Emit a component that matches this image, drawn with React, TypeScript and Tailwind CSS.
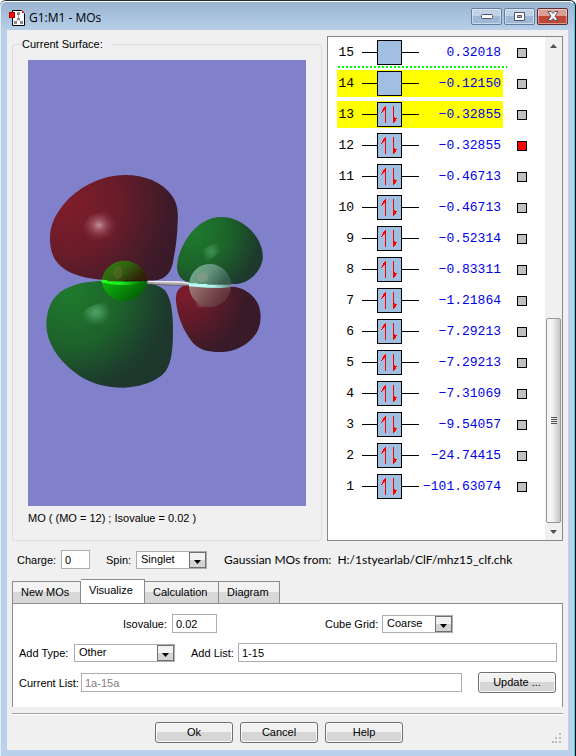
import { useState } from "react";
import type { ReactNode } from "react";

type Orbital = { n: number; energy: string; occupied: boolean; highlighted?: boolean };

const ORBITALS: Orbital[] = [
  { n: 15, energy: "0.32018", occupied: false },
  { n: 14, energy: "-0.12150", occupied: false, highlighted: true },
  { n: 13, energy: "-0.32855", occupied: true, highlighted: true },
  { n: 12, energy: "-0.32855", occupied: true },
  { n: 11, energy: "-0.46713", occupied: true },
  { n: 10, energy: "-0.46713", occupied: true },
  { n: 9, energy: "-0.52314", occupied: true },
  { n: 8, energy: "-0.83311", occupied: true },
  { n: 7, energy: "-1.21864", occupied: true },
  { n: 6, energy: "-7.29213", occupied: true },
  { n: 5, energy: "-7.29213", occupied: true },
  { n: 4, energy: "-7.31069", occupied: true },
  { n: 3, energy: "-9.54057", occupied: true },
  { n: 2, energy: "-24.74415", occupied: true },
  { n: 1, energy: "-101.63074", occupied: true },
];

const TABS = [
  { name: "New MOs", width: "w-[69px]" },
  { name: "Visualize", width: "w-[64px]" },
  { name: "Calculation", width: "w-[74px]" },
  { name: "Diagram", width: "w-[61px]" },
];

function AppIcon() {
  return (
    <svg width="17" height="18" viewBox="0 0 17 18" aria-hidden="true">
      <path d="M3.500 1.500H12.500L15.500 4.500V16.500H3.500Z" fill="#fff" stroke="#000" />
      <path d="M13 2H14L15 3V4H13Z" fill="#f00" />
      <path d="M9.500 5V10L6 14M9.500 10L13 14" fill="none" stroke="#aaa" />
      <path d="M8 3H11V6H8ZM8 9H11V11H8ZM5 12H8V15H5ZM11 12H14V15H11Z" fill="#8b8b8b" />
      <rect x="0.5" y="3.5" width="5" height="5" fill="#f00" stroke="#b00" />
    </svg>
  );
}

function CaptionButton({ label, close, children }: { label: string; close?: boolean; children: ReactNode }) {
  return (
    <button
      aria-label={label}
      className={`flex h-[17px] w-[31px] items-center justify-center rounded-xs border shadow-[inset_0_0_0_1px_rgba(255,255,255,0.45)] ${
        close
          ? "border-[#5b2a33] bg-linear-to-b from-[#dc9e92] from-45% to-[#bd4634] to-50%"
          : "border-[#647f9e] bg-linear-to-b from-[#bfd2e6] from-45% to-[#9fb8d3] to-50%"
      }`}
    >
      {children}
    </button>
  );
}

function Surface() {
  return (
    <svg
      className="min-h-0 w-full grow"
      viewBox="28 60 278 446"
      preserveAspectRatio="xMidYMid slice"
      role="img"
      aria-label="Molecular orbital surface"
    >
      <defs>
        <radialGradient id="redBig" gradientUnits="userSpaceOnUse" cx="110" cy="130" r="350">
          <stop offset="0" stopColor="#7f1d2b" />
          <stop offset="0.45" stopColor="#691c29" />
          <stop offset="0.85" stopColor="#401b29" />
          <stop offset="1" stopColor="#381a28" />
        </radialGradient>
        <radialGradient id="greenBig" gradientUnits="userSpaceOnUse" cx="120" cy="400" r="310">
          <stop offset="0" stopColor="#1f7a2d" />
          <stop offset="0.5" stopColor="#1d622b" />
          <stop offset="0.85" stopColor="#1d402d" />
          <stop offset="1" stopColor="#1d372c" />
        </radialGradient>
        <radialGradient id="greenSmall" gradientUnits="userSpaceOnUse" cx="490" cy="215" r="205">
          <stop offset="0" stopColor="#1f7a2d" />
          <stop offset="0.5" stopColor="#1c652a" />
          <stop offset="1" stopColor="#1d382c" />
        </radialGradient>
        <radialGradient id="redSmall" gradientUnits="userSpaceOnUse" cx="465" cy="400" r="185">
          <stop offset="0" stopColor="#7d1b2a" />
          <stop offset="0.5" stopColor="#5e1a29" />
          <stop offset="1" stopColor="#391a28" />
        </radialGradient>
        <radialGradient id="shineRed">
          <stop offset="0" stopColor="#c3909d" />
          <stop offset="0.35" stopColor="#a55a68" stopOpacity="0.75" />
          <stop offset="1" stopColor="#7f2535" stopOpacity="0" />
        </radialGradient>
        <radialGradient id="shineGreen">
          <stop offset="0" stopColor="#50a366" />
          <stop offset="0.5" stopColor="#439056" stopOpacity="0.75" />
          <stop offset="1" stopColor="#30783e" stopOpacity="0.1" />
        </radialGradient>
        <linearGradient id="atomTop" x1="0" y1="0" x2="1" y2="0.55">
          <stop offset="0" stopColor="#2f8510" />
          <stop offset="0.55" stopColor="#335f10" />
          <stop offset="1" stopColor="#302006" />
        </linearGradient>
        <linearGradient id="atomBottom" x1="0" y1="0" x2="1" y2="0.5">
          <stop offset="0" stopColor="#0db80f" />
          <stop offset="0.45" stopColor="#07930a" />
          <stop offset="1" stopColor="#065906" />
        </linearGradient>
        <linearGradient id="fluorTop" x1="0" y1="0" x2="1" y2="0.4">
          <stop offset="0" stopColor="#79ae8c" />
          <stop offset="0.55" stopColor="#63957d" />
          <stop offset="1" stopColor="#365d4e" />
        </linearGradient>
        <linearGradient id="fluorBottom" x1="0" y1="0" x2="1" y2="0.4">
          <stop offset="0" stopColor="#a37c79" />
          <stop offset="0.6" stopColor="#764a4d" />
          <stop offset="1" stopColor="#5d3038" />
        </linearGradient>
        <linearGradient id="band" x1="0" x2="1">
          <stop offset="0" stopColor="#23ff25" />
          <stop offset="0.45" stopColor="#1de81f" />
          <stop offset="1" stopColor="#087009" />
        </linearGradient>
        <linearGradient id="fluorBand" x1="0" x2="1">
          <stop offset="0" stopColor="#bafff8" />
          <stop offset="0.55" stopColor="#b1f5f1" />
          <stop offset="1" stopColor="#658b87" />
        </linearGradient>
      </defs>
      <rect x="-500" y="-500" width="1600" height="1600" fill="#8180cb" />
      <g transform="translate(30 160) scale(0.33333)">
        <path
          d="M285 45C215 45 150 80 110 123C76 160 60 195 60 235C60 285 78 312 112 333C150 352 190 358 230 360L365 362C408 362 426 334 430 300C438 260 442 225 443 185C445 155 442 128 424 104C395 66 345 45 285 45Z"
          fill="url(#redBig)"
        />
        <path
          d="M222 362C160 364 105 376 76 410C52 438 46 480 51 516C60 566 96 610 145 645C185 672 230 683 280 683C330 682 386 664 409 631C426 602 429 560 429 510C429 450 422 415 405 391C380 365 310 362 222 362Z"
          fill="url(#greenBig)"
        />
        <path
          d="M575 171C535 171 500 193 474 230C453 262 442 290 441 323C443 348 455 362 478 367L620 372C662 366 692 334 698 298C701 265 685 230 655 203C632 184 605 171 575 171Z"
          fill="url(#greenSmall)"
        />
        <path
          d="M470 376C445 379 436 398 438 424C442 466 459 513 489 549C510 570 534 576 570 576C615 577 662 553 683 512C694 488 695 456 684 431C669 402 640 381 605 380Z"
          fill="url(#redSmall)"
        />
        <path d="M150 205L178 168L245 145L263 160L250 228L185 246Z" fill="url(#shineRed)" />
        <path d="M152 470L170 445L236 418L243 496L163 493Z" fill="url(#shineGreen)" />
        <path d="M513 292L522 266L574 240L568 278L532 308Z" fill="url(#shineGreen)" opacity="0.7" />
        <ellipse cx="515" cy="432" rx="26" ry="16" fill="url(#shineRed)" opacity="0.7" />

        <path d="M215 363A69 69 0 0 1 352 363Z" fill="url(#atomTop)" />
        <path d="M215 363A69 69 0 0 0 352 363Z" fill="url(#atomBottom)" />
        <ellipse cx="264" cy="338" rx="14" ry="19" fill="#78723c" opacity="0.35" />
        <path d="M214 359L232 360V364L285 366L342 365C320 374 280 378 242 373L214 367Z" fill="url(#band)" />
        <path d="M285 362H350" stroke="#25170a" strokeWidth="3" strokeDasharray="15 4" />

        <path d="M352 363L452 364L481 368V377L420 375L352 371Z" fill="#aaa5aa" />
        <path d="M355 364L452 366L480 370" fill="none" stroke="#f1eff1" strokeWidth="4" />
        <path d="M352 372L430 376L480 377" fill="none" stroke="#5a555a" strokeWidth="2" />

        <path d="M477 374A63 64 0 0 1 603 378Z" fill="url(#fluorTop)" />
        <path d="M477 374A63 64 0 0 0 603 380Z" fill="url(#fluorBottom)" />
        <ellipse cx="518" cy="352" rx="17" ry="14" fill="#b0a28e" opacity="0.3" />
        <path d="M477 370H502V372H532V374H603V381L575 384L532 383L477 379Z" fill="url(#fluorBand)" />
      </g>
    </svg>
  );
}

function SpinBox({ occupied }: { occupied: boolean }) {
  return (
    <svg width="25" height="25" viewBox="0 0 25 25" className="shrink-0" aria-hidden="true">
      <rect x="0.5" y="0.5" width="24" height="24" fill="#a1bfe0" stroke="#000" />
      {occupied && (
        <g fill="#f00">
          <path d="M8 4H9V21H8V8H7V9H6V10H5V11H4V10H5V8H6V6H7V5H8Z" />
          <path d="M16 4H17V15H18V16H21V15V16H20V17H19V19H18V20H17V21H16Z" />
        </g>
      )}
    </svg>
  );
}

function OrbitalRow({ orbital, selected, onSelect }: { orbital: Orbital; selected: boolean; onSelect: () => void }) {
  return (
    <div className="flex h-[27px] items-center gap-3.5">
      <div
        className={`flex h-full w-[166px] items-center font-['Liberation_Mono',monospace] text-[13px] ${
          orbital.highlighted ? "bg-[#ffff00]" : ""
        }`}
      >
        <span className="w-[17px] text-right">{orbital.n}</span>
        <span className="ml-2 h-px w-[15px] bg-black" />
        <SpinBox occupied={orbital.occupied} />
        <span className="h-px w-[17px] bg-black" />
        <span className="grow pr-0.5 text-right text-[#0000e6]">{orbital.energy.replace("-", "−")}</span>
      </div>
      <input
        type="checkbox"
        aria-label={`Orbital ${orbital.n}`}
        checked={selected}
        onChange={onSelect}
        className="size-2.5 appearance-none border border-black bg-[#c0c0c0] checked:bg-[#ff0000]"
      />
    </div>
  );
}

function Dropdown({ id, value, width }: { id: string; value: string; width: string }) {
  return (
    <div className={`grid h-[18px] ${width} grid-cols-[1fr_17px] border border-[#abadb3] bg-white`}>
      <select
        id={id}
        defaultValue={value}
        className="col-span-2 col-start-1 row-start-1 h-4 appearance-none pb-0.5 pl-1 leading-[14px]"
      >
        <option>{value}</option>
      </select>
      <span className="pointer-events-none col-start-2 row-start-1 flex h-4 items-end justify-center border border-[#707070] bg-linear-to-b from-[#f2f2f2] from-50% to-[#d4d4d4] to-50% pb-[3px]">
        <svg width="7" height="4" viewBox="0 0 7 4" aria-hidden="true">
          <path d="M0 0H7L3.500 4Z" fill="#000" />
        </svg>
      </span>
    </div>
  );
}

function PushButton({ children }: { children: ReactNode }) {
  return (
    <button className="h-[21px] w-[78px] rounded-[3px] border border-[#707070] bg-linear-to-b from-[#f2f2f2] from-45% to-[#d6d6d6] to-50% pb-px shadow-[inset_0_0_0_1px_#fafafa]">
      {children}
    </button>
  );
}

const FIELD = "h-[19px] border border-[#abadb3] bg-white px-[3px]";

export default function App() {
  const [selected, setSelected] = useState(12);
  const [tab, setTab] = useState("Visualize");

  return (
    <div className="flex min-h-screen flex-col rounded-t-md border-t border-r border-t-[#202830] border-r-black bg-[#b9d1ea] font-['Liberation_Sans',Arial,sans-serif] text-[11px] leading-[14px] text-black">
      <div className="flex grow flex-col rounded-t-md border-t border-r border-l border-t-white border-r-[#35d5ee] border-l-[#e4eef8] bg-linear-to-b from-[#9ab4d1] to-[#b9d1ea] to-[30px] pr-1.5 pb-1.5 pl-1.5">
        <header className="flex h-7 items-center gap-[3px] pt-1 pl-0.5">
          <AppIcon />
          <h1 className="grow font-['Open_Sans',sans-serif] text-xs">G1:M1 - MOs</h1>
          <div className="flex gap-0.5 pb-1">
            <CaptionButton label="Minimize">
              <svg width="12" height="6" viewBox="0 0 12 6" aria-hidden="true">
                <rect x="0.5" y="1.500" width="11" height="4" rx="1" fill="#fff" stroke="#535666" />
              </svg>
            </CaptionButton>
            <CaptionButton label="Maximize">
              <svg width="11" height="9" viewBox="0 0 11 9" aria-hidden="true">
                <path d="M0.500 0.500H10.500V8.500H0.500ZM3.500 3.500V5.500H7.500V3.500Z" fill="#fff" fillRule="evenodd" stroke="#535666" />
              </svg>
            </CaptionButton>
            <CaptionButton label="Close" close>
              <svg width="12" height="10" viewBox="0 0 12 10" aria-hidden="true">
                <path d="M1 0.500H4L6 2.500L8 0.500H11L8 5L11 9.500H8L6 7.500L4 9.500H1L4 5Z" fill="#fff" stroke="#535666" />
              </svg>
            </CaptionButton>
          </div>
        </header>

        <main className="flex grow flex-col bg-[#f0f0f0] px-[5px] pt-1.5 pb-[7px]">
          <section className="flex grow gap-[5px]">
            <fieldset className="mt-px flex grow flex-col rounded-[3px] border border-[#d5dfe5] px-[15px] pt-[9px] pb-[13px]">
              <legend className="-ml-1.5 pr-2">Current Surface:</legend>
              <Surface />
              <p className="mt-[5px] h-4">MO ( (MO = 12) ; Isovalue = 0.02 )</p>
            </fieldset>

            <div className="flex w-[236px] shrink-0 border border-[#828790] bg-white">
              <ul className="grow space-y-1 pt-0.5 pb-10 pl-[9px]">
                {ORBITALS.map((orbital) => (
                  <li key={orbital.n} className="relative">
                    <OrbitalRow
                      orbital={orbital}
                      selected={orbital.n === selected}
                      onSelect={() => setSelected(orbital.n)}
                    />
                    {orbital.n === 15 && (
                      <span className="absolute top-full left-px h-0.5 w-[169px] bg-[repeating-linear-gradient(90deg,#00ff00_0_2px,transparent_2px_4px)]" />
                    )}
                  </li>
                ))}
              </ul>
              <div className="flex w-[17px] flex-col items-center bg-[#f0f0f0]">
                <button aria-label="Scroll up" className="flex h-[17px] w-full items-center justify-center">
                  <svg width="7" height="4" viewBox="0 0 7 4" aria-hidden="true">
                    <path d="M0 4L3.500 0L7 4Z" fill="#505050" />
                  </svg>
                </button>
                <div className="grow-[277]" />
                <div className="flex w-[15px] grow-[205] flex-col items-center justify-center gap-px rounded-xs border border-[#979797] bg-linear-to-r from-[#f5f5f5] from-40% to-[#c5c5c8]">
                  <span className="h-px w-1.5 bg-[#505050]" />
                  <span className="h-px w-1.5 bg-[#505050]" />
                  <span className="h-px w-1.5 bg-[#505050]" />
                  <span className="h-px w-1.5 bg-[#505050]" />
                </div>
                <button aria-label="Scroll down" className="flex h-[17px] w-full items-center justify-center">
                  <svg width="7" height="4" viewBox="0 0 7 4" aria-hidden="true">
                    <path d="M0 0H7L3.500 4Z" fill="#505050" />
                  </svg>
                </button>
              </div>
            </div>
          </section>

          <section className="mt-[9px] flex h-[19px] items-center pl-[5px]">
            <label htmlFor="charge" className="w-11">Charge:</label>
            <input id="charge" defaultValue="0" className={`${FIELD} w-[29px]`} />
            <label htmlFor="spin" className="ml-4 w-[30px]">Spin:</label>
            <Dropdown id="spin" value="Singlet" width="w-[71px]" />
            <p className="ml-[17px] font-['Lato',sans-serif] text-xs whitespace-pre">
              Gaussian MOs from:  H:/1styearlab/ClF/mhz15_clf.chk
            </p>
          </section>

          <div role="tablist" className="mt-2.5 flex items-end">
            {TABS.map(({ name, width }) => (
              <button
                key={name}
                role="tab"
                aria-selected={tab === name}
                onClick={() => setTab(name)}
                className={`${width} border-t border-r border-[#898c95] pl-2 text-left first:border-l ${
                  tab === name
                    ? "h-6 bg-white pb-1"
                    : "h-[22px] bg-linear-to-b from-[#f2f2f2] from-45% to-[#d8d8d8] to-50% pb-0.5"
                }`}
              >
                {name}
              </button>
            ))}
          </div>

          <div role="tabpanel" className="flex flex-col gap-2.5 border-x border-t border-[#898c95] bg-white pt-2.5 pr-[5px] pb-3.5 pl-1.5">
            <div className="flex h-[19px] items-center pl-[104px]">
              <label htmlFor="isovalue" className="w-[49px]">Isovalue:</label>
              <input id="isovalue" defaultValue="0.02" className={`${FIELD} w-[45px]`} />
              <label htmlFor="grid" className="ml-auto w-[57px]">Cube Grid:</label>
              <Dropdown id="grid" value="Coarse" width="mr-[104px] w-[71px]" />
            </div>
            <div className="flex h-[19px] items-center">
              <label htmlFor="type" className="w-[55px]">Add Type:</label>
              <Dropdown id="type" value="Other" width="w-[101px]" />
              <label htmlFor="list" className="ml-4 w-[47px]">Add List:</label>
              <input id="list" defaultValue="1-15" className={`${FIELD} min-w-0 grow`} />
            </div>
            <div className="flex h-[21px] items-center pr-px">
              <label htmlFor="current" className="w-[62px]">Current List:</label>
              <input id="current" readOnly value="1a-15a" className={`${FIELD} mr-4 min-w-0 grow text-[#808080]`} />
              <PushButton>Update ...</PushButton>
            </div>
          </div>

          <footer className="mt-1.5 flex items-end border-t border-[#a0a0a0] pt-2 shadow-[inset_0_1px_0_#fff]">
            <div className="flex grow justify-center gap-[7px] pr-1.5">
              <PushButton>Ok</PushButton>
              <PushButton>Cancel</PushButton>
              <PushButton>Help</PushButton>
            </div>
            <svg width="10" height="10" viewBox="0 0 10 10" className="mr-px" aria-hidden="true">
              <path
                d="M7 0h2v2h-2zM7 4h2v2h-2zM7 8h2v2h-2zM3 4h2v2h-2zM3 8h2v2h-2zM0 8h2v2h-2z"
                fill="#bcbcbc"
              />
            </svg>
          </footer>
        </main>
      </div>
    </div>
  );
}
